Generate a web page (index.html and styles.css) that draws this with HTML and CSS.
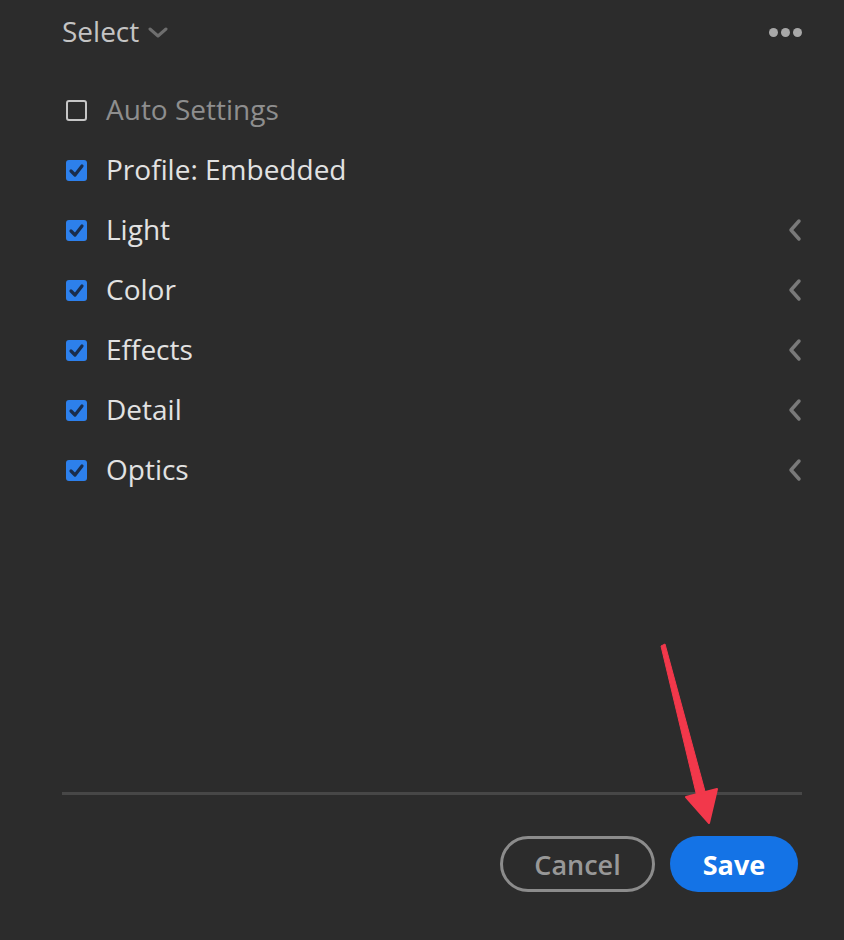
FILE: index.html
```html
<!DOCTYPE html>
<html lang="en">
<head>
    <meta name="viewport" content="width=device-width, initial-scale=1.0" />
    <title>Presets</title>
    <link rel="stylesheet" href="styles.css">
</head>
<body>
    <div class="panel">
        <div class="header">
            <div class="select">Select
                <svg class="caret" width="20" height="12" viewBox="0 0 20 12"><path d="M2 2 L10 9 L18 2" fill="none" stroke="#6e6e6e" stroke-width="3" stroke-linecap="round" stroke-linejoin="round"/></svg>
            </div>
            <div class="more"><span></span><span></span><span></span></div>
        </div>

        <ul class="options">
            <li class="option muted">
                <span class="box"></span>
                <span class="label">Auto Settings</span>
            </li>
            <li class="option">
                <span class="box checked"><svg width="21" height="21" viewBox="0 0 21 21"><path d="M5 11 L9 15 L16 6" fill="none" stroke="#1a2d4c" stroke-width="3.2" stroke-linecap="round" stroke-linejoin="round"/></svg></span>
                <span class="label">Profile: Embedded</span>
            </li>
            <li class="option">
                <span class="box checked"><svg width="21" height="21" viewBox="0 0 21 21"><path d="M5 11 L9 15 L16 6" fill="none" stroke="#1a2d4c" stroke-width="3.2" stroke-linecap="round" stroke-linejoin="round"/></svg></span>
                <span class="label">Light</span>
                <svg class="expand" width="16" height="24" viewBox="0 0 16 24"><path d="M12 3 L4 12 L12 21" fill="none" stroke="#7a7a7a" stroke-width="3.5" stroke-linecap="round" stroke-linejoin="round"/></svg>
            </li>
            <li class="option">
                <span class="box checked"><svg width="21" height="21" viewBox="0 0 21 21"><path d="M5 11 L9 15 L16 6" fill="none" stroke="#1a2d4c" stroke-width="3.2" stroke-linecap="round" stroke-linejoin="round"/></svg></span>
                <span class="label">Color</span>
                <svg class="expand" width="16" height="24" viewBox="0 0 16 24"><path d="M12 3 L4 12 L12 21" fill="none" stroke="#7a7a7a" stroke-width="3.5" stroke-linecap="round" stroke-linejoin="round"/></svg>
            </li>
            <li class="option">
                <span class="box checked"><svg width="21" height="21" viewBox="0 0 21 21"><path d="M5 11 L9 15 L16 6" fill="none" stroke="#1a2d4c" stroke-width="3.2" stroke-linecap="round" stroke-linejoin="round"/></svg></span>
                <span class="label">Effects</span>
                <svg class="expand" width="16" height="24" viewBox="0 0 16 24"><path d="M12 3 L4 12 L12 21" fill="none" stroke="#7a7a7a" stroke-width="3.5" stroke-linecap="round" stroke-linejoin="round"/></svg>
            </li>
            <li class="option">
                <span class="box checked"><svg width="21" height="21" viewBox="0 0 21 21"><path d="M5 11 L9 15 L16 6" fill="none" stroke="#1a2d4c" stroke-width="3.2" stroke-linecap="round" stroke-linejoin="round"/></svg></span>
                <span class="label">Detail</span>
                <svg class="expand" width="16" height="24" viewBox="0 0 16 24"><path d="M12 3 L4 12 L12 21" fill="none" stroke="#7a7a7a" stroke-width="3.5" stroke-linecap="round" stroke-linejoin="round"/></svg>
            </li>
            <li class="option">
                <span class="box checked"><svg width="21" height="21" viewBox="0 0 21 21"><path d="M5 11 L9 15 L16 6" fill="none" stroke="#1a2d4c" stroke-width="3.2" stroke-linecap="round" stroke-linejoin="round"/></svg></span>
                <span class="label">Optics</span>
                <svg class="expand" width="16" height="24" viewBox="0 0 16 24"><path d="M12 3 L4 12 L12 21" fill="none" stroke="#7a7a7a" stroke-width="3.5" stroke-linecap="round" stroke-linejoin="round"/></svg>
            </li>
        </ul>

        <div class="footer">
            <button class="btn cancel">Cancel</button>
            <button class="btn save">Save</button>
        </div>
    </div>

    <!-- annotation arrow -->
    <svg class="arrow" width="844" height="940" viewBox="0 0 844 940">
        <polygon points="661,646 665,644 706,795 697,797" fill="#f2384b" stroke="#f2384b" stroke-width="1" stroke-linejoin="round"/>
        <polygon points="686,797 717,789 709,823" fill="#f2384b" stroke="#f2384b" stroke-width="2" stroke-linejoin="round"/>
    </svg>
</body>
</html>
```

FILE: styles.css
```css
* {
    padding: 0;
    margin: 0;
    box-sizing: border-box;
}

body {
    background: #2c2c2c;
    font-family: "Open Sans", sans-serif;
    height: 940px;
    overflow: hidden;
}

.panel {
    height: 940px;
    display: flex;
    flex-direction: column;
    padding: 0 42px 0 62px;
}

.header {
    height: 64px;
    display: flex;
    justify-content: space-between;
    align-items: center;
}

.select {
    font-size: 28px;
    color: #c4c4c4;
    display: flex;
    align-items: center;
    gap: 9px;
    margin-top: -2px;
}

.caret {
    margin-top: 3px;
}

.more {
    display: flex;
    gap: 3px;
    margin-right: 0;
}

.more span {
    width: 9px;
    height: 9px;
    border-radius: 50%;
    background: #a8a8a8;
}

.options {
    list-style: none;
    margin-top: 16px;
}

.option {
    height: 60px;
    display: flex;
    align-items: center;
    font-size: 28px;
    color: #e2e2e2;
}

.option.muted {
    color: #8e8e8e;
}

.box {
    width: 21px;
    height: 21px;
    margin-left: 4px;
    margin-right: 19px;
    border: 2px solid #c6c6c6;
    border-radius: 3px;
    display: flex;
}

.box.checked {
    border: none;
    background: #2d80ec;
}

.label {
    flex: 1;
    margin-top: -3px;
}

.expand {
    margin-right: -1px;
}

.footer {
    margin-top: auto;
    border-top: 3px solid #474747;
    margin-bottom: 48px;
    padding-top: 41px;
    display: flex;
    justify-content: flex-end;
    gap: 15px;
    padding-right: 4px;
}

.btn {
    height: 56px;
    border-radius: 28px;
    font-family: "Open Sans", sans-serif;
    font-weight: 600;
    font-size: 27px;
}

.cancel {
    width: 155px;
    background: transparent;
    border: 3px solid #8c8c8c;
    color: #989898;
}

.save {
    width: 128px;
    background: #1473e6;
    border: none;
    color: #ffffff;
    font-weight: 700;
}

.arrow {
    position: absolute;
    top: 0;
    left: 0;
    pointer-events: none;
}
```
